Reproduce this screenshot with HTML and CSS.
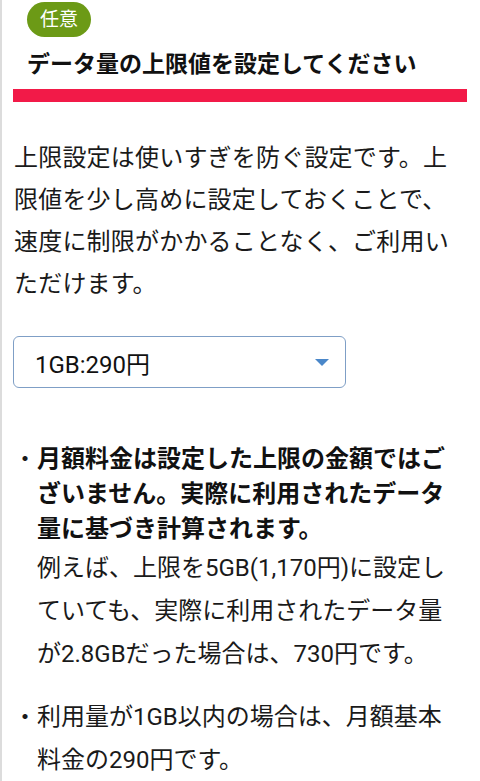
FILE: index.html
```html
<!DOCTYPE html>
<html lang="ja">
<head>
<meta charset="utf-8">
<link rel="stylesheet" href="styles.css">
</head>
<body>
<div class="page">
  <div class="head">
    <span class="badge">任意</span>
    <h2 class="title">データ量の上限値を設定してください</h2>
  </div>
  <div class="bar"></div>
  <p class="lead">上限設定は使いすぎを防ぐ設定です。上限値を少し高めに設定しておくことで、速度に制限がかかることなく、ご利用いただけます。</p>
  <div class="select">
    <span class="select-value">1GB:290円</span>
    <span class="caret"></span>
  </div>
  <ul class="notes">
    <li class="note">
      <span class="dot">・</span>
      <div class="note-body">
        <strong class="strong">月額料金は設定した上限の金額ではございません。実際に利用されたデータ量に基づき計算されます。</strong>
        <div class="sub">例えば、上限を5GB(1,170円)に設定していても、実際に利用されたデータ量が2.8GBだった場合は、730円です。</div>
      </div>
    </li>
    <li class="note">
      <span class="dot">・</span>
      <div class="note-body">利用量が1GB以内の場合は、月額基本料金の290円です。</div>
    </li>
  </ul>
</div>
</body>
</html>
```
FILE: styles.css
```css
html, body {
  margin: 0;
  padding: 0;
  background: #fff;
}
body {
  font-family: Roboto, "Noto Sans CJK JP", sans-serif;
  color: #1a1a1a;
}
.page {
  border-left: 2px solid #dcdcdc;
  min-height: 781px;
  box-sizing: border-box;
  padding: 2px 13px 0 11px;
}
.head {
  padding-left: 14px;
}
.badge {
  display: inline-flex;
  align-items: center;
  justify-content: center;
  width: 64px;
  height: 35px;
  border-radius: 18px;
  background: #6c9a16;
  color: #fff;
  font-size: 19px;
  line-height: 1;
}
.title {
  margin: 11px 0 0;
  font-size: 23px;
  line-height: 34px;
  font-weight: bold;
  color: #111;
}
.bar {
  margin-top: 7px;
  height: 13px;
  background: #f21a48;
}
.lead {
  margin: 35px 0 0;
  padding-left: 1px;
  font-size: 24px;
  line-height: 42px;
  letter-spacing: 0.2px;
}
.select {
  margin-top: 31px;
  width: 333px;
  height: 52px;
  box-sizing: border-box;
  border: 1px solid #7f9fc6;
  border-radius: 6px;
  display: flex;
  align-items: center;
  justify-content: space-between;
  padding: 0 16px 0 21px;
}
.select-value {
  font-size: 24px;
  color: #111;
}
.caret {
  width: 0;
  height: 0;
  border-left: 7px solid transparent;
  border-right: 7px solid transparent;
  border-top: 7px solid #4a87c9;
}
.notes {
  list-style: none;
  margin: 54px 0 0;
  padding: 0 12px 0 0;
}
.note {
  display: flex;
  font-size: 24px;
  line-height: 43px;
  margin-bottom: 20px;
}
.note:first-child .dot {
  line-height: 35px;
}
.dot {
  flex: 0 0 24px;
}
.note-body {
  flex: 1;
}
.strong {
  display: block;
  font-weight: bold;
  line-height: 35px;
  color: #111;
}
.sub {
  line-height: 43px;
}
```
